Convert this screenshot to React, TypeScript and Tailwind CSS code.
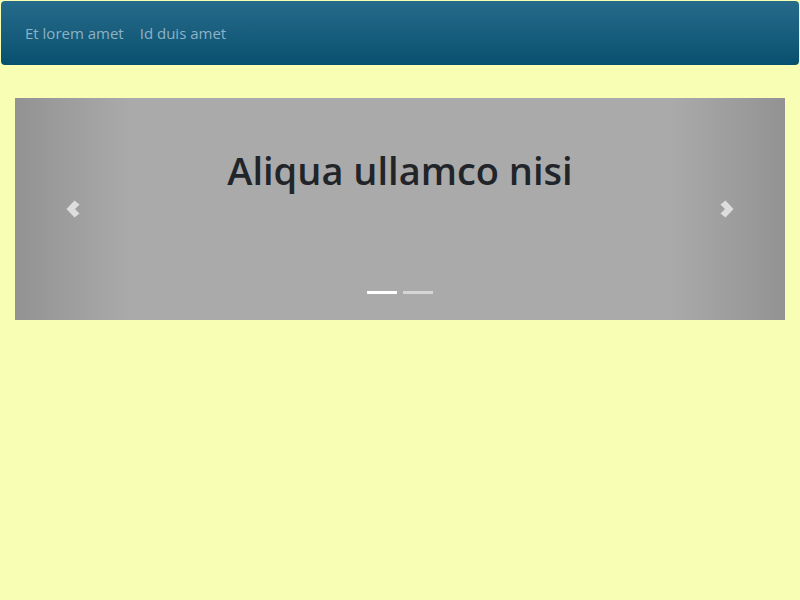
import { useState } from 'react'

const SLIDES = ['Aliqua ullamco nisi', 'Id duis amet']
const LINKS = ['Et lorem amet', 'Id duis amet']

function Chevron({ dir }: { dir: 'left' | 'right' }) {
  return (
    <svg width="16" height="18" viewBox="0 0 16 18" fill="currentColor">
      {dir === 'left'
        ? <path d="M9.5 0.5 L14.5 4.5 L10 9 L14.5 13.5 L9.5 17.5 L1.5 9 Z" />
        : <path d="M6.5 0.5 L1.5 4.5 L6 9 L1.5 13.5 L6.5 17.5 L14.5 9 Z" />}
    </svg>
  )
}

export default function App() {
  const [active, setActive] = useState(0)

  return (
    <div className="min-h-screen bg-[#f8feb3] pt-px" style={{ fontFamily: '"Open Sans", "Noto Sans", sans-serif' }}>
      {/* Navbar */}
      <nav className="mx-px h-16 rounded bg-gradient-to-b from-[#266b8b] to-[#07506f] flex items-center px-[24px] gap-[16px]">
        {LINKS.map(l => (
          <a key={l} href="#" className="text-[15px] text-[#8db2c5] leading-none">{l}</a>
        ))}
      </nav>

      {/* Carousel */}
      <div className="relative mx-[15px] mt-[33px] h-[222px] bg-[#aaaaaa] overflow-hidden">
        <h2 className="pt-[50px] text-center text-[38px] font-semibold leading-[1.2] text-[#212529]">
          {SLIDES[active]}
        </h2>

        <button
          onClick={() => setActive((active + SLIDES.length - 1) % SLIDES.length)}
          className="absolute inset-y-0 left-0 w-[15%] flex items-center justify-center text-white/65 bg-gradient-to-r from-black/[0.14] to-transparent"
        >
          <Chevron dir="left" />
        </button>
        <button
          onClick={() => setActive((active + 1) % SLIDES.length)}
          className="absolute inset-y-0 right-0 w-[15%] flex items-center justify-center text-white/65 bg-gradient-to-l from-black/[0.14] to-transparent"
        >
          <Chevron dir="right" />
        </button>

        <div className="absolute bottom-[26px] inset-x-0 flex justify-center gap-[6px]">
          {SLIDES.map((s, i) => (
            <button
              key={s}
              onClick={() => setActive(i)}
              className={`w-[30px] h-[3px] ${i === active ? 'bg-white' : 'bg-white/50'}`}
            />
          ))}
        </div>
      </div>
    </div>
  )
}
